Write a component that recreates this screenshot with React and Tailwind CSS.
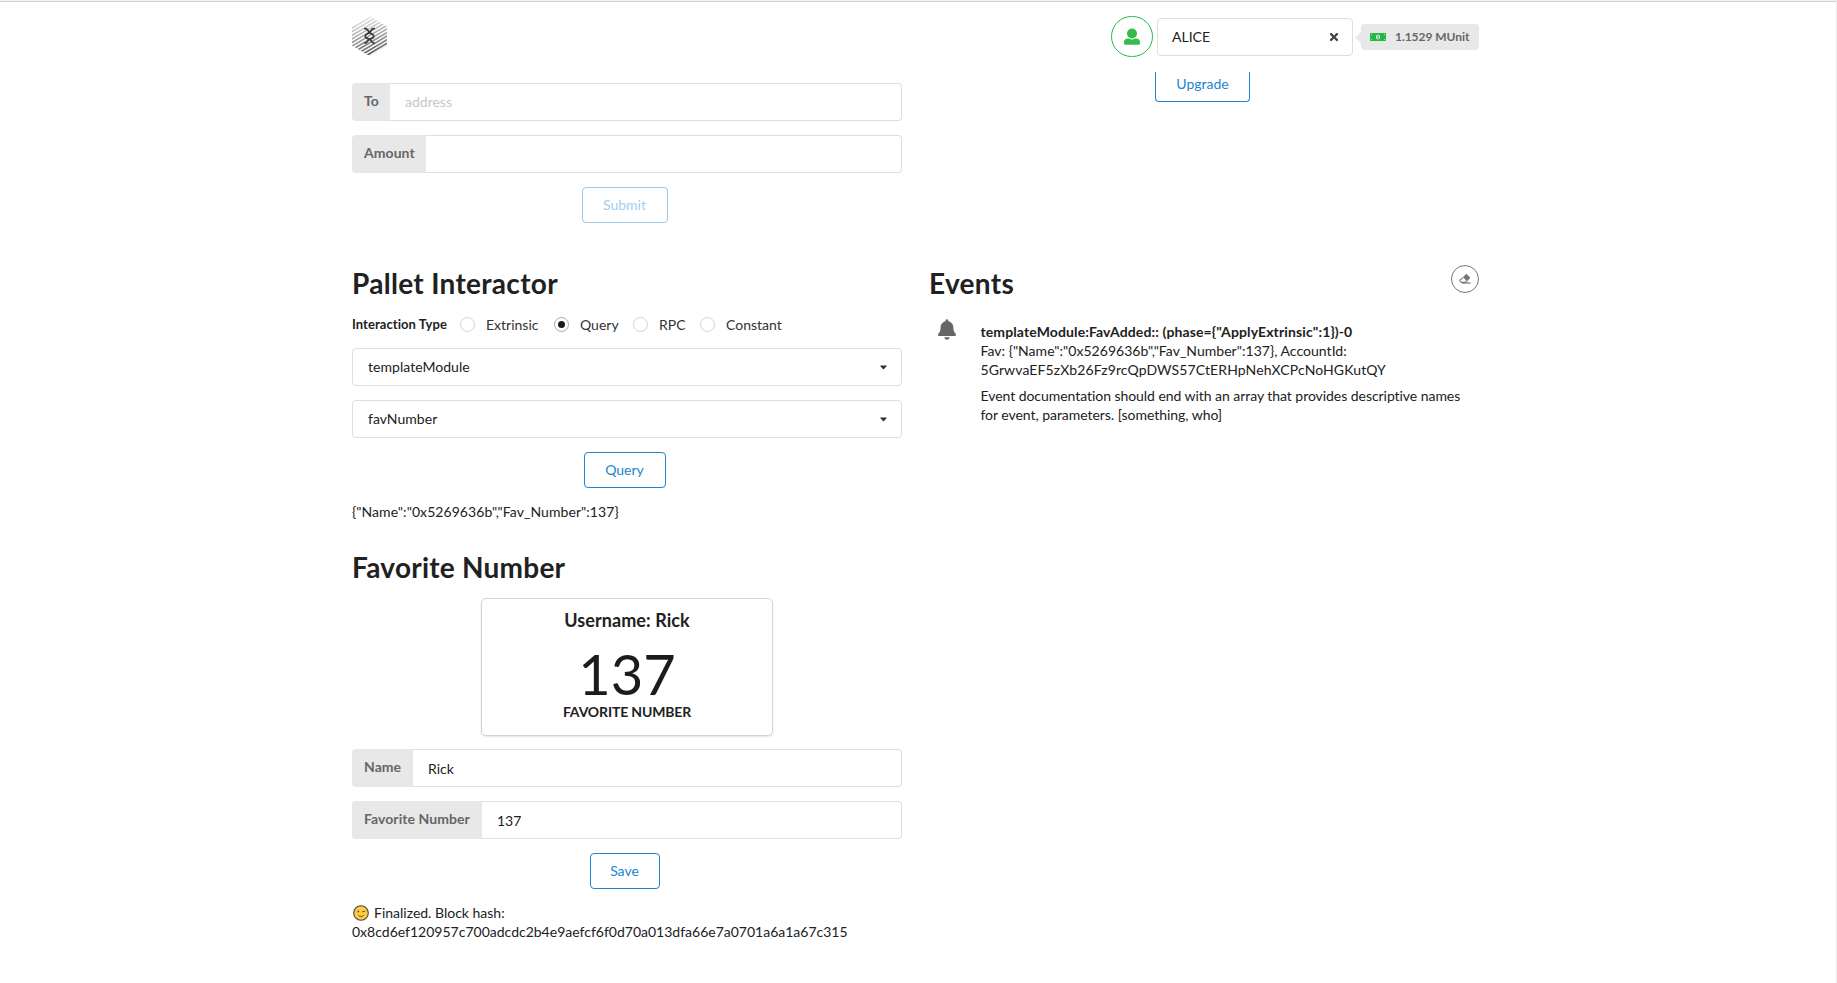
import React from "react";
import { FaTimes, FaBell, FaCaretDown } from "react-icons/fa";

const field = "flex h-[38px] w-[550px] rounded-[4px] border border-[#dededf] bg-white";

function Labeled({ label, width, children, placeholder }) {
  return (
    <div className="flex h-[38px] w-[550px]">
      <div className={"shrink-0 whitespace-nowrap rounded-l-[4px] bg-[#e8e8e8] pl-3 pt-[11px] font-bold leading-[14px] tracking-[0.06px] text-[#666] " + width}>{label}</div>
      <div className={"flex-1 rounded-r-[4px] border border-l-0 border-[#dededf] pl-[15px] leading-[18px] " + (placeholder ? "pt-[9px] text-[#c7c7c7]" : "pt-[10px] text-[#212121]")}>{children}</div>
    </div>
  );
}

function Btn({ children, className = "" }) {
  return (
    <div className={"mr-[5px] mt-[14px] flex h-9 items-center justify-center rounded-[4px] border pb-px text-[14px] leading-[14px] " + className}>{children}</div>
  );
}

function Radio({ label, on, className }) {
  return (
    <div className={"flex items-center " + className}>
      <span className={"flex h-[15px] w-[15px] shrink-0 items-center justify-center rounded-full border " + (on ? "border-[#a9a9aa]" : "border-[#d4d4d5]")}>
        {on && <span className="h-[7px] w-[7px] rounded-full bg-[#1b1c1d]" />}
      </span>
      <span className="ml-[11px] leading-[17px] text-[#333]">{label}</span>
    </div>
  );
}

function Select({ children }) {
  return (
    <div className={field + " items-center justify-between pl-[15px] pr-[14px] text-[#212121]"}>
      <span className="leading-[14px] tracking-[0.04px]">{children}</span>
      <FaCaretDown className="h-3 w-[7px] text-[#333]" />
    </div>
  );
}

function Logo() {
  const lines = Array.from({ length: 16 }, (_, i) => i);
  return (
    <svg className="h-[40px] w-[35px]" viewBox="0 0 35 40">
      <defs>
        <clipPath id="hex"><path d="M17.5 0 35 10.500V29.500L17.500 40 0 29.500V10.500Z" /></clipPath>
        <linearGradient id="shade" gradientUnits="userSpaceOnUse" x1="12" y1="2" x2="20" y2="40">
          <stop offset="0" stopColor="#e2e2e2" />
          <stop offset="0.45" stopColor="#a8a8a8" />
          <stop offset="1" stopColor="#555" />
        </linearGradient>
      </defs>
      <g clipPath="url(#hex)" stroke="url(#shade)">
        {lines.map((i) => (
          <path key={i} d={`M-1 ${5.5 + i * 3.6}L36 ${-16.5 + i * 3.6}`} strokeWidth={1.4 + i * 0.03} />
        ))}
      </g>
      <g fill="none" stroke="#3a3a3a" strokeWidth="1.700" strokeLinecap="round">
        <path d="M12.800 12.600C15.500 12 15.500 14.500 17.500 16.500C19.200 18 21.800 18.300 21.800 20.200C21.800 22.300 19.500 22.300 17.500 23.200C15.500 24 15.500 27.500 12.800 27" />
        <path d="M22.200 12.600C19.500 12 19.500 14.500 17.500 16.500C15.800 18 13.200 18.300 13.200 20.200C13.200 22.300 15.500 22.300 17.500 23.200C19.500 24 19.500 27.500 22.200 27" />
      </g>
    </svg>
  );
}

function Person() {
  return (
    <svg className="h-[17px] w-[16px]" viewBox="0 0 16 17" fill="#35bd4b">
      <circle cx="8" cy="5.500" r="5" />
      <path d="M4 10.500h1c1.800 1.300 4.200 1.300 6 0h1c2.500 0 4 1.500 4 4v1c0 .8-.5 1.200-1.200 1.200H1.200C.5 16.700 0 16.300 0 15.500v-1c0-2.500 1.500-4 4-4Z" />
    </svg>
  );
}

function Bill() {
  return (
    <svg className="mr-[9px] h-[8px] w-[16px]" viewBox="0 0 16 8">
      <rect width="16" height="8" rx="0.800" fill="#21ba45" />
      <ellipse cx="8" cy="4" rx="2.100" ry="2.500" fill="#e8e8e8" />
      <path d="M7.300 3.200 8.200 2.700V5.200M7.300 5.300h1.700" fill="none" stroke="#21ba45" strokeWidth="0.800" />
      <path d="M1 1h1.200L1 2.200ZM15 1h-1.200L15 2.200ZM1 7h1.200L1 5.800ZM15 7h-1.200L15 5.800Z" fill="#e8e8e8" />
    </svg>
  );
}

function Eraser() {
  return (
    <svg className="mb-px h-[10px] w-[12px]" viewBox="0 0 12 10">
      <path d="M4 3.200 6.800.3c.3-.3.700-.3 1 0l3 3c.4.400.4.800 0 1.200L8 7.300Z" fill="#767676" />
      <path d="M4.200 3.300 1.200 5.800c-.5.500-.5.900 0 1.400L2.500 8.400h3.800L8 6.900" fill="none" stroke="#767676" strokeWidth="1.100" />
      <path d="M3 9h8.500" stroke="#767676" strokeWidth="1.200" />
    </svg>
  );
}

function Wink() {
  return (
    <svg className="mr-[5px] h-[16px] w-[16px] shrink-0" viewBox="0 0 16 16">
      <circle cx="8" cy="8" r="7.300" fill="#ffcb45" stroke="#444" strokeWidth="1.100" />
      <circle cx="5.300" cy="6.500" r="0.900" fill="#5a4a28" />
      <path d="M9.500 6.800 11.800 6.300" stroke="#5a4a28" strokeWidth="0.900" strokeLinecap="round" />
      <path d="M5.500 10.500c1.200 1.400 3.800 1.400 5 0" fill="none" stroke="#5a4a28" strokeWidth="0.900" strokeLinecap="round" />
    </svg>
  );
}

export default function App() {
  return (
    <div className="flex h-[983px] w-[1837px] flex-col overflow-hidden border-r border-[#ececec] bg-white font-[Lato,sans-serif] text-[14px] leading-[19px] text-[#212121]">
      <div className="h-[2px] shrink-0 border-b border-[#d2d2d2] bg-[#f0f0f0]" />
      <header className="flex h-[70px] shrink-0 pl-[352px]">
        <div className="pt-[14px]"><Logo /></div>
        <div className="ml-[724px] mt-[14px] flex h-[41px] w-[42px] items-center justify-center rounded-full border border-[#21ba45]">
          <Person />
        </div>
        <div className="ml-1 mt-4 flex h-[38px] w-[196px] items-center justify-between rounded-[4px] border border-[#dededf] pl-[14px] pr-[13px]">
          <span className="leading-[14px]">ALICE</span>
          <FaTimes className="h-3 w-[10px] text-[#444]" />
        </div>
        <div className="ml-2 mt-[22px] flex h-[26px] w-[118px] items-center rounded-[4px] bg-[#e8e8e8] pl-[9px] text-[12px] font-bold tracking-[-0.05px] text-[#666]">
          <span className="-ml-[13px] mr-[4px] h-[9px] w-[9px] rotate-45 bg-[#e8e8e8]" />
          <Bill />
          <span className="whitespace-nowrap leading-3">1.1529 MUnit</span>
        </div>
      </header>

      <main className="flex pl-[352px]">
        <div className="flex w-[550px] flex-col items-center">
          <div className="mt-[11px]"><Labeled label="To" width="w-[38px]" placeholder>address</Labeled></div>
          <div className="mt-[14px]"><Labeled label="Amount" width="w-[74px]" /></div>
          <Btn className="w-[86px] border-[#9bcaec] text-[#a3ceed]">Submit</Btn>

          <h1 className="mt-[42px] w-full text-[28px] font-bold leading-[36px] tracking-[0.3px]">Pallet Interactor</h1>
          <div className="mt-[13px] flex h-5 w-full items-center">
            <span className="w-[108px] text-[13px] font-bold leading-[13px] tracking-[0.06px]">Interaction Type</span>
            <Radio label="Extrinsic" className="w-[94px]" />
            <Radio label="Query" on className="w-[79px]" />
            <Radio label="RPC" className="w-[67px]" />
            <Radio label="Constant" className="" />
          </div>
          <div className="mt-[14px]"><Select>templateModule</Select></div>
          <div className="mt-[14px]"><Select>favNumber</Select></div>
          <Btn className="w-[82px] border-[#2185d0] text-[#2185d0]">Query</Btn>
          <div className="mt-[14px] w-full tracking-[0.06px]">{'{"Name":"0x5269636b","Fav_Number":137}'}</div>

          <h1 className="mt-[28px] w-full text-[28px] font-bold leading-[36px] tracking-[0.24px]">Favorite Number</h1>
          <div className="mt-[13px] flex h-[138px] w-[292px] flex-col items-center rounded-[5px] border border-[#d4d4d5] shadow-[0_1px_2px_#e4e4e5]">
            <div className="mt-[10px] text-[18px] font-bold leading-[22px] tracking-[0.08px]">Username: Rick</div>
            <div className="mt-[15px] text-[56px] leading-[56px] text-[#1b1c1d]">137</div>
            <div className="mt-[3px] font-bold leading-[14px] tracking-[-0.15px]">FAVORITE NUMBER</div>
          </div>
          <div className="mt-[13px]"><Labeled label="Name" width="w-[61px]">Rick</Labeled></div>
          <div className="mt-[14px]"><Labeled label="Favorite Number" width="w-[130px]">137</Labeled></div>
          <Btn className="w-[70px] border-[#2185d0] text-[#2185d0]">Save</Btn>
          <div className="mt-[14px] flex w-full items-center pl-[1px]"><Wink />Finalized. Block hash:</div>
          <div className="w-full">0x8cd6ef120957c700adcdc2b4e9aefcf6f0d70a013dfa66e7a0701a6a1a67c315</div>
        </div>

        <div className="ml-7 w-[549px]">
          <div className="ml-[225px] flex h-[30px] w-[95px] items-center justify-center rounded-b-[4px] border border-t-0 border-[#2185d0] pb-[6px] leading-[14px] text-[#2185d0]">Upgrade</div>
          <div className="mt-[163px] flex justify-between">
            <h1 className="-ml-px text-[28px] font-bold leading-[36px] tracking-[0.3px]">Events</h1>
            <div className="flex h-[28px] w-[28px] items-center justify-center rounded-full border border-[#767676]">
              <Eraser />
            </div>
          </div>
          <div className="mt-[18px] flex">
            <FaBell className="ml-2 h-[21px] w-[18px] text-[#666]" />
            <div className="ml-[24.500px] mt-[3px] w-[500px] whitespace-nowrap">
              <div className="font-bold tracking-[0.12px]">{'templateModule:FavAdded:: (phase={"ApplyExtrinsic":1})-0'}</div>
              <div className="tracking-[0.03px]">{'Fav: {"Name":"0x5269636b","Fav_Number":137}, AccountId:'}</div>
              <div className="tracking-[0.11px]">5GrwvaEF5zXb26Fz9rcQpDWS57CtERHpNehXCPcNoHGKutQY</div>
              <div className="mt-[7px] tracking-[-0.05px]">Event documentation should end with an array that provides descriptive names</div>
              <div className="tracking-[-0.04px]">for event, parameters. [something, who]</div>
            </div>
          </div>
        </div>
      </main>
    </div>
  );
}
